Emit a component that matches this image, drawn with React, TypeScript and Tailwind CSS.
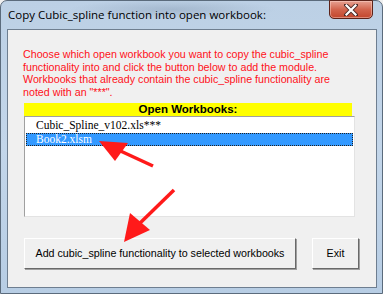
import React from "react";

const sans = { fontFamily: '"Liberation Sans", Arial, sans-serif' };
const serif = { fontFamily: '"Liberation Serif", "Times New Roman", serif' };

export default function App() {
  return (
    <div className="w-[383px] h-[294px] relative overflow-hidden bg-[#f0f0f0]">
      <div className="absolute inset-0 rounded-t-[7px] border border-[#5b6b7c] bg-gradient-to-b from-[#bcd0e5] via-[#c3d6ea] to-[#b7cde4] flex flex-col">
        {/* title bar */}
        <div className="h-[28px] flex items-start justify-between shrink-0 bg-[radial-gradient(ellipse_at_45%_30%,rgba(120,140,165,0.35)_0%,transparent_35%)]">
          <div
            className="pl-[7px] pt-[7px] text-[11.5px] leading-[14px] text-black"
            style={{ fontFamily: '"Open Sans", "Noto Sans", sans-serif' }}
          >
            Copy Cubic_spline function into open workbook:
          </div>
          <div className="mr-[9px] w-[44px] h-[19px] -mt-px rounded-b-[5px] border border-[#5c2219] bg-gradient-to-b from-[#e6a192] via-[#d2644d] to-[#c2452c] flex items-center justify-center shadow-[inset_0_0_0_1px_rgba(255,220,210,0.45)]">
            <svg width="14" height="12" viewBox="0 0 14 12">
              <path d="M2 1 L12 11 M12 1 L2 11" stroke="#4a2a28" strokeWidth="4" strokeLinecap="square" />
              <path d="M2.5 1.5 L11.5 10.5 M11.5 1.5 L2.5 10.5" stroke="#ffffff" strokeWidth="2.2" strokeLinecap="square" />
            </svg>
          </div>
        </div>
        {/* client */}
        <div className="ml-[6px] mr-[5px] mb-[5px] flex-1 border border-[#6e7e90] bg-[#f0f0f0] flex flex-col pl-[15px] pt-[18px]">
          <p className="text-[10.7px] leading-[12.7px] text-[#ff1020] w-[325px]" style={sans}>
            Choose which open workbook you want to copy the cubic_spline functionality into and click the button below to add the module. Workbooks that already contain the cubic_spline functionality are noted with an "***".
          </p>
          <div className="mt-[4px] ml-[1px] w-[328px] h-[13px] bg-[#ffff00] text-center text-[11.5px] leading-[13px] font-bold text-black" style={sans}>
            Open Workbooks:
          </div>
          <div className="ml-[1px] w-[331px] h-[101px] border border-t-[#a0a0a0] border-l-[#a0a0a0] border-r-[#e3e3e3] border-b-[#e3e3e3] bg-white p-px">
            <div className="h-[15px] pl-[10px] text-[11.5px] leading-[15px] text-black" style={serif}>
              Cubic_Spline_v102.xls***
            </div>
            <div className="h-[13px] pl-[9px] text-[11.5px] leading-[11px] text-white bg-[#3399ff] border border-dotted border-[#222]" style={serif}>
              Book2.xlsm
            </div>
          </div>
          <div className="mt-[21px] ml-[1px] flex gap-[16px]" style={sans}>
            <div className="w-[272px] h-[31px] bg-[#f0f0f0] border border-t-white border-l-white border-r-[#696969] border-b-[#696969] shadow-[1px_1px_0_#a0a0a0] flex items-center justify-center text-[10.7px] text-black">
              Add cubic_spline functionality to selected workbooks
            </div>
            <div className="w-[47px] h-[31px] bg-[#f0f0f0] border border-t-white border-l-white border-r-[#696969] border-b-[#696969] shadow-[1px_1px_0_#a0a0a0] flex items-center justify-center text-[10.7px] text-black">
              Exit
            </div>
          </div>
        </div>
      </div>
      {/* red arrows overlay */}
      <svg className="absolute inset-0 pointer-events-none" width="383" height="294" viewBox="0 0 383 294">
        <line x1="153" y1="166" x2="114" y2="148" stroke="#ff1a1a" strokeWidth="3.5" />
        <polygon points="99,141 128,143 115,161" fill="#ff1a1a" />
        <line x1="174" y1="190" x2="137" y2="226" stroke="#ff1a1a" strokeWidth="3.5" />
        <polygon points="124,242 130,213 150,230" fill="#ff1a1a" />
      </svg>
    </div>
  );
}
